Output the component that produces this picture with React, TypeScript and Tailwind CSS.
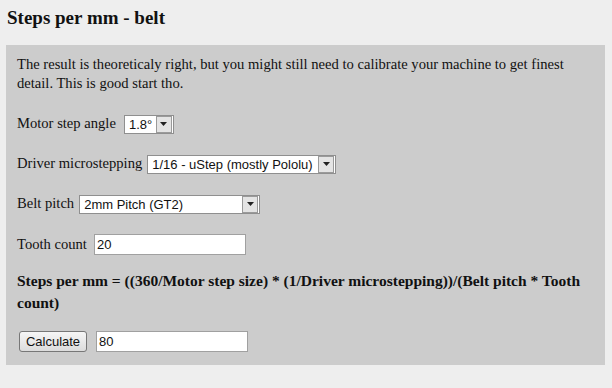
import React from "react";

function Arrow() {
  return (
    <div className="flex h-[17px] w-[16px] items-center justify-center border border-[#9a9a9a] bg-[#e4e4e4]">
      <svg width="7" height="4" viewBox="0 0 7 4">
        <path d="M0 0 L7 0 L3.5 4 Z" fill="#222" />
      </svg>
    </div>
  );
}

function Select({ value, width }: { value: string; width: string }) {
  return (
    <div className={`flex h-[19px] items-center justify-between border border-[#8f8f8f] bg-white pl-[4px] pr-[1px] ${width}`}>
      <span className="font-['Liberation_Sans',Arial,sans-serif] text-[13px] leading-none text-[#111]">{value}</span>
      <Arrow />
    </div>
  );
}

function TextBox({ value }: { value: string }) {
  return (
    <div className="flex h-[21px] w-[152px] items-center border border-[#a0a0a0] bg-white pl-[2px]">
      <span className="font-['Liberation_Sans',Arial,sans-serif] text-[13px] leading-none text-[#111]">{value}</span>
    </div>
  );
}

export default function App() {
  return (
    <div className="min-h-[388px] w-[612px] bg-[#eeeeee] font-['Liberation_Serif','Times_New_Roman',serif] text-[#111]">
      {/* Title */}
      <h1 className="pl-[7px] pt-[6px] text-[19px] font-bold leading-[24px]">Steps per mm - belt</h1>

      {/* Calculator panel */}
      <div className="ml-[6px] mt-[15px] h-[320px] w-[599px] bg-[#cccccc] pl-[11px] pt-[10px] text-[14.6px]">
        <p className="leading-[19px]">
          The result is theoreticaly right, but you might still need to calibrate your machine to get finest
          <br />
          detail. This is good start tho.
        </p>

        <div className="mt-[21px] flex h-[20px] items-center gap-[8px]">
          <span>Motor step angle</span>
          <Select value="1.8°" width="w-[50px]" />
        </div>

        <div className="mt-[20px] flex h-[20px] items-center gap-[5px]">
          <span>Driver microstepping</span>
          <Select value="1/16 - uStep (mostly Pololu)" width="w-[189px]" />
        </div>

        <div className="mt-[20px] flex h-[20px] items-center gap-[5px]">
          <span>Belt pitch</span>
          <Select value="2mm Pitch (GT2)" width="w-[181px]" />
        </div>

        <div className="mt-[20px] flex h-[21px] items-center gap-[7px]">
          <span>Tooth count</span>
          <TextBox value="20" />
        </div>

        <p className="mt-[15px] text-[15.5px] font-bold leading-[22px]">
          Steps per mm = ((360/Motor step size) * (1/Driver microstepping))/(Belt pitch * Tooth
          <br />
          count)
        </p>

        <div className="mt-[17px] flex h-[21px] items-center gap-[9px] pl-[2px]">
          <button className="h-[21px] w-[68px] rounded-[3px] border border-[#777] bg-gradient-to-b from-[#f6f6f6] to-[#dcdcdc] font-['Liberation_Sans',Arial,sans-serif] text-[13px] leading-none text-[#111]">
            Calculate
          </button>
          <TextBox value="80" />
        </div>
      </div>
    </div>
  );
}
